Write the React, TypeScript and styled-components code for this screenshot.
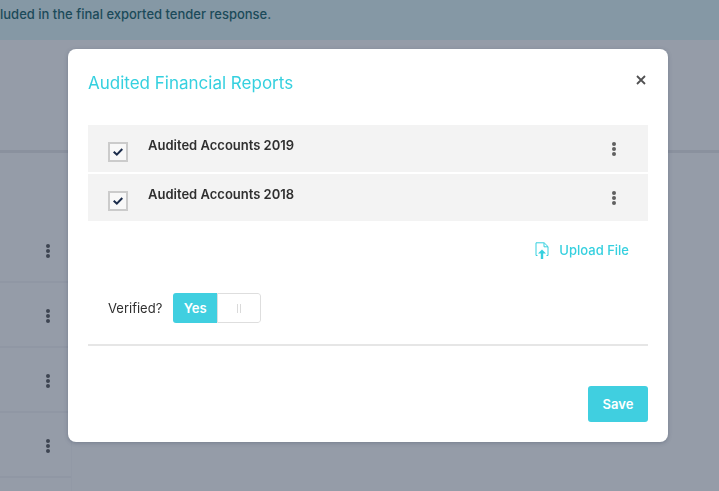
import React, { useState } from "react";
import styled, { createGlobalStyle } from "styled-components";

const GlobalStyle = createGlobalStyle`
  *, *::before, *::after { box-sizing: border-box; }
  body {
    margin: 0;
    font-family: Inter, "Liberation Sans", sans-serif;
    font-size: 13px;
    line-height: 20px;
    color: #2f2f2f;
    background: #fff;
  }
  button, input { font: inherit; }
`;

const Page = styled.div`
  min-height: 100vh;
  overflow: hidden;
`;

const Banner = styled.div`
  height: 40px;
  padding: 4px 0;
  background: #dff7f8;
  color: #0b5b62;
  font-weight: 500;
  white-space: nowrap;
`;

const PageHeader = styled.header`
  height: 113px;
  border-bottom: 3px solid #e9e9eb;
`;

const PageList = styled.ul`
  width: 10%;
  min-width: 72px;
  margin: 0;
  padding: 65px 0 16px;
  list-style: none;
  border-right: 1px solid #f8f8fa;
`;

const PageRow = styled.li`
  display: flex;
  align-items: center;
  justify-content: flex-end;
  height: 65px;
  padding: 3px 15px 0 0;
  border-bottom: 2px solid #f4f4f6;
`;

const Backdrop = styled.div`
  position: fixed;
  inset: 0;
  display: flex;
  justify-content: center;
  align-items: flex-start;
  padding: 49px 0 49px 17px;
  overflow: auto;
  background: rgba(43, 57, 82, 0.5);
`;

const Dialog = styled.section`
  width: 100%;
  max-width: 600px;
  padding: 20px;
  border-radius: 8px;
  background: #fff;
  box-shadow: 0 1px 4px rgba(43, 57, 82, 0.3);
`;

const DialogHeader = styled.header`
  display: flex;
  justify-content: space-between;
  align-items: flex-start;
  height: 56px;
`;

const Title = styled.h2`
  margin: 0;
  font-size: 17px;
  line-height: 28px;
  font-weight: 400;
  color: #35d0df;
`;

const IconButton = styled.button`
  display: grid;
  place-items: center;
  width: 16px;
  height: 24px;
  padding: 0;
  border: 0;
  background: none;
  color: #515152;
  cursor: pointer;
`;

const CloseButton = styled(IconButton)`
  width: 14px;
  height: 22px;
`;

const FileList = styled.ul`
  display: grid;
  gap: 2px;
  margin: 0;
  padding: 0;
  list-style: none;
`;

const FileRow = styled.li`
  display: flex;
  align-items: flex-start;
  height: 47px;
  padding: 0 26px 0 20px;
  background: #f3f3f3;
`;

const FileLabel = styled.label`
  display: flex;
  flex: 1;
  gap: 20px;
  padding-top: 10px;
  font-weight: 600;
`;

const TickBox = styled.span`
  display: grid;
  width: 20px;
  height: 20px;
  margin-top: 7px;
`;

const Tick = styled.input`
  appearance: none;
  grid-area: 1 / 1;
  width: 20px;
  height: 20px;
  margin: 0;
  border: 2px solid #cbcbcb;
  background: #f8f8f8;
  cursor: pointer;

  & + svg {
    grid-area: 1 / 1;
    place-self: center;
    visibility: hidden;
    pointer-events: none;
  }
  &:checked + svg { visibility: visible; }
`;

const RowMenu = styled(IconButton)`
  margin-top: 12px;
  color: #606060;
`;

const UploadLine = styled.div`
  display: flex;
  justify-content: flex-end;
  padding: 19px 19px 0 0;
`;

const UploadButton = styled.button`
  display: flex;
  align-items: center;
  gap: 10px;
  padding: 0;
  border: 0;
  background: none;
  color: #35d0df;
  font-weight: 500;
  cursor: pointer;
`;

const VerifiedLine = styled.label`
  display: flex;
  align-items: center;
  gap: 11px;
  padding: 33px 20px 21px;
  border-bottom: 2px solid #e6e6e6;
`;

const Switch = styled.span`
  display: grid;
  width: 88px;
  height: 30px;
`;

const SwitchInput = styled.input`
  appearance: none;
  grid-area: 1 / 1;
  margin: 0;
  border-radius: 3px;
  cursor: pointer;
`;

const SwitchFace = styled.span<{ $on: boolean }>`
  grid-area: 1 / 1;
  display: flex;
  flex-direction: ${({ $on }) => ($on ? "row" : "row-reverse")};
  border-radius: 3px;
  overflow: hidden;
  pointer-events: none;
`;

const SwitchValue = styled.span<{ $on: boolean }>`
  width: 50%;
  line-height: 30px;
  text-align: center;
  font-weight: 600;
  color: ${({ $on }) => ($on ? "#fff" : "#515152")};
  background: ${({ $on }) => ($on ? "#40cfe0" : "#f2f2f2")};
`;

const SwitchHandle = styled.span<{ $on: boolean }>`
  width: 50%;
  display: flex;
  justify-content: center;
  align-items: center;
  gap: 2px;
  border: 1px solid #dedede;
  border-radius: ${({ $on }) => ($on ? "0 3px 3px 0" : "3px 0 0 3px")};

  &::before, &::after {
    content: "";
    width: 1px;
    height: 9px;
    background: #dadada;
  }
`;

const DialogFooter = styled.footer`
  display: flex;
  justify-content: flex-end;
  padding-top: 40px;
`;

const SaveButton = styled.button`
  min-width: 60px;
  height: 36px;
  padding: 0 14px;
  border: 0;
  border-radius: 3px;
  background: #40cfe0;
  color: #fff;
  font-weight: 600;
  cursor: pointer;
`;

const Dots = () => (
  <svg width="6" height="16" viewBox="0 0 6 16" fill="currentColor" aria-hidden="true">
    <circle cx="3" cy="3" r="2" />
    <circle cx="3" cy="8" r="2" />
    <circle cx="3" cy="13" r="2" />
  </svg>
);

const CheckMark = () => (
  <svg width="10" height="8" viewBox="0 0 10 8" fill="none" stroke="#1b2c4b" strokeWidth="2" aria-hidden="true">
    <path d="M.7 3.8 3.8 6.6 9.3 1" />
  </svg>
);

const Cross = () => (
  <svg width="10" height="10" viewBox="0 0 10 10" fill="none" stroke="currentColor" strokeWidth="1.8" aria-hidden="true">
    <path d="M1 1 9 9M9 1 1 9" />
  </svg>
);

const UploadIcon = () => (
  <svg width="14" height="17" viewBox="0 0 14 17" fill="none" stroke="currentColor" aria-hidden="true">
    <path d="M2.5 13.5H1V.8H9.2L13 4.6V13.5H11.5M9 1V4.8H13" />
    <path d="M7 17V10" strokeWidth="2.4" />
    <path d="M3 11.6 7 7.4 11 11.6Z" fill="currentColor" stroke="none" />
  </svg>
);

const files = ["Audited Accounts 2019", "Audited Accounts 2018"];
const tenderRows = [1, 2, 3, 4];

export default function App() {
  const [verified, setVerified] = useState(true);

  return (
    <>
      <GlobalStyle />
      <Page>
        <Banner>luded in the final exported tender response.</Banner>
        <PageHeader />
        <PageList>
          {tenderRows.map((row) => (
            <PageRow key={row}>
              <IconButton type="button" aria-label="Row options"><Dots /></IconButton>
            </PageRow>
          ))}
        </PageList>
      </Page>
      <Backdrop>
        <Dialog role="dialog" aria-modal="true" aria-labelledby="dialog-title">
          <DialogHeader>
            <Title id="dialog-title">Audited Financial Reports</Title>
            <CloseButton type="button" aria-label="Close"><Cross /></CloseButton>
          </DialogHeader>
          <FileList>
            {files.map((name) => (
              <FileRow key={name}>
                <FileLabel>
                  <TickBox>
                    <Tick type="checkbox" defaultChecked />
                    <CheckMark />
                  </TickBox>
                  {name}
                </FileLabel>
                <RowMenu type="button" aria-label={`Options for ${name}`}><Dots /></RowMenu>
              </FileRow>
            ))}
          </FileList>
          <UploadLine>
            <UploadButton type="button"><UploadIcon />Upload File</UploadButton>
          </UploadLine>
          <VerifiedLine>
            Verified?
            <Switch>
              <SwitchInput
                type="checkbox"
                role="switch"
                checked={verified}
                onChange={(event) => setVerified(event.target.checked)}
              />
              <SwitchFace $on={verified}>
                <SwitchValue $on={verified}>{verified ? "Yes" : "No"}</SwitchValue>
                <SwitchHandle $on={verified} />
              </SwitchFace>
            </Switch>
          </VerifiedLine>
          <DialogFooter>
            <SaveButton type="button">Save</SaveButton>
          </DialogFooter>
        </Dialog>
      </Backdrop>
    </>
  );
}
